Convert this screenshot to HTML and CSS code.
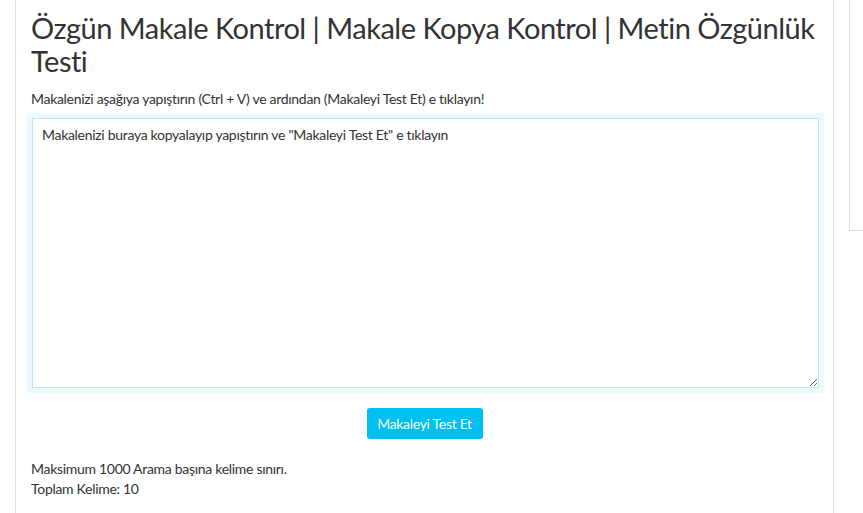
FILE: index.html
```html
<!DOCTYPE html>
<html>
  <head>
    <meta charset="utf-8">
    <meta name="viewport" content="width=device-width, initial-scale=1">
    <title>Özgün Makale Kontrol</title>
    <link rel="stylesheet" href="styles.css">
  </head>
  <body>
    <div class="wrap">
      <div class="card">
        <h1 class="title">Özgün Makale Kontrol | Makale Kopya Kontrol | Metin Özgünlük Testi</h1>
        <p class="lead">Makalenizi aşağıya yapıştırın (Ctrl + V) ve ardından (Makaleyi Test Et) e tıklayın!</p>
        <textarea class="article">Makalenizi buraya kopyalayıp yapıştırın ve "Makaleyi Test Et" e tıklayın</textarea>
        <div class="actions">
          <button class="btn">Makaleyi Test Et</button>
        </div>
        <div class="info">
          Maksimum 1000 Arama başına kelime sınırı.<br>
          Toplam Kelime: <span id="word_count">10</span>
        </div>
      </div>
      <div class="side"></div>
    </div>
  </body>
</html>
```

FILE: styles.css
```css
body {
  margin: 0;
  font-family: Lato, "Open Sans", sans-serif;
  font-size: 14px;
  letter-spacing: -0.3px;
  color: #333;
  background: #fff;
}
.wrap {
  display: flex;
  align-items: flex-start;
  gap: 15px;
  padding-left: 15px;
}
.card {
  width: 787px;
  flex: none;
  padding: 11px 15px 20px;
  border: 1px solid #ddd;
  border-top: none;
  min-height: 482px;
}
.title {
  margin: 0;
  font-size: 29px;
  font-weight: 400;
  letter-spacing: -0.5px;
  line-height: 33px;
  color: #333;
}
.lead {
  margin: 12px 0 9px;
  line-height: 20px;
}
.article {
  display: block;
  box-sizing: border-box;
  width: 787px;
  height: 270px;
  margin: 0 0 0 1px;
  padding: 6px 9px;
  border: 1px solid #b9e8f5;
  box-shadow: 0 0 0 5px #ecf9fd;
  font-family: inherit;
  font-size: 14px;
  letter-spacing: -0.3px;
  line-height: 20px;
  color: #333;
  resize: vertical;
  outline: none;
}
.actions {
  display: flex;
  justify-content: center;
  margin-top: 20px;
}
.btn {
  width: 116px;
  height: 31px;
  border: none;
  border-radius: 3px;
  background: #00c0ef;
  color: #fff;
  font-family: inherit;
  font-size: 14px;
  letter-spacing: -0.3px;
}
.info {
  margin-top: 20px;
  line-height: 20px;
}
.side {
  flex: 1;
  height: 230px;
  border-left: 1px solid #ddd;
  border-bottom: 1px solid #ddd;
}
```
